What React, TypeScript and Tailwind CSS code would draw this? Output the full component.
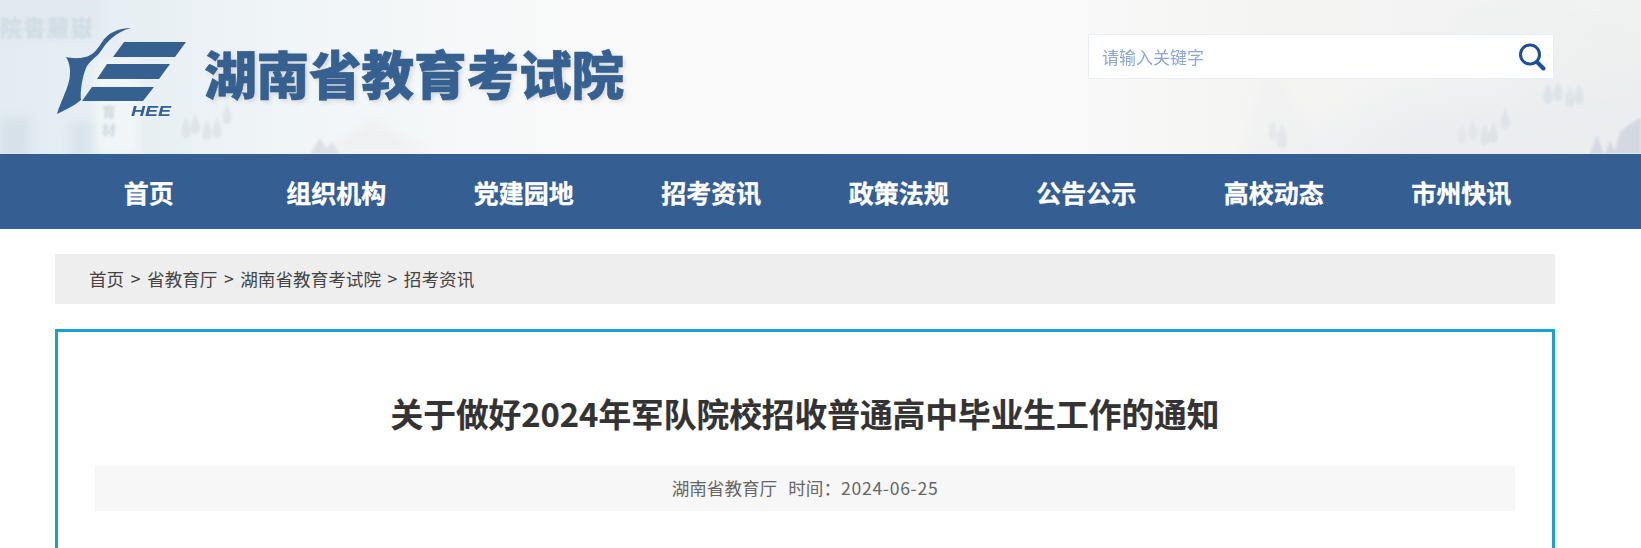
const NAV = ["首页", "组织机构", "党建园地", "招考资讯", "政策法规", "公告公示", "高校动态", "市州快讯"];

function Drop({ x, y, s = 1, o = 0.55 }: { x: number; y: number; s?: number; o?: number }) {
  return (
    <path
      d={`M${x} ${y - 11 * s}C${x + 2 * s} ${y - 5 * s} ${x + 4.5 * s} ${y - 1 * s} ${x + 4.5 * s} ${y + 4 * s}C${x + 4.5 * s} ${y + 8 * s} ${x + 2 * s} ${y + 10 * s} ${x} ${y + 10 * s}C${x - 2 * s} ${y + 10 * s} ${x - 4.5 * s} ${y + 8 * s} ${x - 4.5 * s} ${y + 4 * s}C${x - 4.5 * s} ${y - 1 * s} ${x - 2 * s} ${y - 5 * s} ${x} ${y - 11 * s}Z`}
      fill="#d5dae0"
      opacity={o}
    />
  );
}

function HeaderArt() {
  return (
    <svg className="absolute inset-0 h-full w-full" viewBox="0 0 1641 154" preserveAspectRatio="none" aria-hidden="true">
      <defs>
        <linearGradient id="base" x1="0" y1="0" x2="1" y2="0">
          <stop offset="0" stopColor="#e2ecf2" />
          <stop offset="0.1" stopColor="#e9f0f4" />
          <stop offset="0.2" stopColor="#f2f6f8" />
          <stop offset="0.36" stopColor="#f9f9f9" />
          <stop offset="0.62" stopColor="#fafafa" />
          <stop offset="0.78" stopColor="#f4f4f3" />
          <stop offset="1" stopColor="#f0f1f1" />
        </linearGradient>
        <filter id="soft" x="-10%" y="-10%" width="120%" height="120%">
          <feGaussianBlur stdDeviation="1" />
        </filter>
        <filter id="softer" x="-10%" y="-10%" width="120%" height="120%">
          <feGaussianBlur stdDeviation="5" />
        </filter>
        <filter id="wide" x="-30%" y="-60%" width="160%" height="220%">
          <feGaussianBlur stdDeviation="22" />
        </filter>
      </defs>
      <rect width="1641" height="154" fill="url(#base)" />
      <path d="M1240 175L1420 100L1700 75V175Z" fill="#e8ebef" opacity="0.7" filter="url(#wide)" />
      <g filter="url(#softer)">
        <rect x="-10" y="-10" width="110" height="50" fill="#dfe8ee" opacity="0.7" />
        <rect x="0" y="118" width="30" height="40" fill="#d2dde5" opacity="0.7" />
        <rect x="70" y="122" width="24" height="36" fill="#d6e0e7" opacity="0.7" />
        <rect x="95" y="60" width="44" height="94" fill="#f3f7f9" opacity="0.8" />
        <path d="M320 154L372 118L430 154Z" fill="#eff0f2" />
        <path d="M1240 154L1270 60L1320 154Z" fill="#ecedee" opacity="0.35" />
        <path d="M1450 20C1480 0 1560 0 1641 30V120L1520 90Z" fill="#ecedee" opacity="0.3" />
      </g>
      <g filter="url(#soft)" fontFamily="'Noto Sans CJK SC',serif" fontWeight="900">
        <text x="0" y="36" fontSize="22" letterSpacing="1.5" fill="#c8d6df" opacity="0.65">院書麓嶽</text>
        <text x="102" y="117" fontSize="14" fill="#b5c3cd" opacity="0.5">育</text>
        <text x="102" y="135" fontSize="14" fill="#b5c3cd" opacity="0.5">材</text>
      </g>
      <g filter="url(#soft)">
        <Drop x={186} y={128} />
        <Drop x={195} y={124} />
        <Drop x={207} y={130} />
        <Drop x={217} y={128} />
        <Drop x={227} y={114} />
        <Drop x={1273} y={130} o={0.35} />
        <Drop x={1282} y={136} s={1.2} o={0.4} />
        <Drop x={1462} y={134} o={0.3} />
        <Drop x={1473} y={130} o={0.35} />
        <Drop x={1485} y={135} />
        <Drop x={1493} y={133} />
        <Drop x={1505} y={119} />
        <Drop x={1548} y={94} />
        <Drop x={1558} y={91} />
        <Drop x={1570} y={97} />
        <Drop x={1579} y={94} />
        <path d="M1590 154L1597 136L1604 154ZM1605 154L1610 140L1616 154ZM1614 154L1620 132L1630 124L1641 118V154Z" fill="#d4d9e1" />
        <path d="M310 154L320 138L330 154ZM322 154L332 142L340 154Z" fill="#dde1e5" />
      </g>
    </svg>
  );
}

function Logo() {
  return (
    <svg className="mt-[26px] shrink-0" width="130" height="92" viewBox="56 26 130 92" aria-label="HEE">
      <path
        d="M131 28C118 28 108 33 102 42C97 50 92 56 85 57C78 59 71 58 66 57C70 63 71 72 69 81C66 93 60 103 57 114C65 110 74 106 81 100C80 92 82 78 86 68C89 61 96 58 101 51C106 43 115 32 131 28Z"
        fill="#36608f"
      />
      <path d="M124 42H186L175 57H113Z M107 64H170L159 79H97Z M92 87H154L143 101H82Z" fill="#36608f" />
      <text
        x="131"
        y="116"
        fontFamily="'Liberation Sans',sans-serif"
        fontSize="15"
        fontWeight="700"
        fontStyle="italic"
        fill="#36608f"
        textLength="40"
        lengthAdjust="spacingAndGlyphs"
      >
        HEE
      </text>
    </svg>
  );
}

export default function App() {
  return (
    <div className="h-[548px] overflow-hidden bg-white font-['Noto_Sans_CJK_SC',sans-serif]">
      <header className="relative h-[154px] overflow-hidden">
        <HeaderArt />
        <div className="relative flex items-start justify-between pl-[56px] pr-[87px]">
          <div className="flex items-start gap-[18px]">
            <Logo />
            <h1 className="mt-[38px] text-[52.7px] leading-[68px] font-black tracking-[-0.2px] whitespace-nowrap text-[#36608f] [-webkit-text-stroke:0.6px_#36608f] [text-shadow:2px_2px_5px_rgba(0,0,0,0.14)]">
              湖南省教育考试院
            </h1>
          </div>
          <div className="mt-[34px] flex h-[45px] w-[466px] items-center border border-[#e9eef4] bg-white pr-[7px] pl-[13px]">
            <input
              className="min-w-0 flex-1 bg-transparent text-[17px] leading-[24px] outline-none placeholder:text-[#8aa6d8]"
              placeholder="请输入关键字"
              readOnly
            />
            <svg width="28" height="28" viewBox="0 0 28 28" fill="none" stroke="#1c4f96" aria-hidden="true">
              <circle cx="12" cy="11.5" r="9.5" strokeWidth="3" />
              <path d="M19 19L25.5 25.5" strokeWidth="4" strokeLinecap="round" />
            </svg>
          </div>
        </div>
      </header>

      <nav className="h-[75px] bg-[#355e92]">
        <ul className="ml-[55px] grid h-full w-[1500px] grid-cols-8">
          {NAV.map((item) => (
            <li key={item} className="flex items-center justify-center text-[25px] leading-[32px] font-bold text-white [-webkit-text-stroke:0.3px_#ffffff]">
              {item}
            </li>
          ))}
        </ul>
      </nav>

      <main className="ml-[55px] w-[1500px] pt-[25px]">
        <div className="flex h-[50px] items-center bg-[#eeeeee] pl-[34px] text-[17.6px] leading-[26px] [word-spacing:2.6px] whitespace-pre text-[#444444]">
          首页 &gt; 省教育厅 &gt; 湖南省教育考试院 &gt; 招考资讯
        </div>
        <article className="mt-[25px] h-[300px] border-[3px] border-[#1ba0d5] px-[37px] pt-[59px]">
          <h2 className="text-center text-[32.7px] leading-[44px] font-bold text-[#333333] [-webkit-text-stroke:0.2px_#333333]">
            关于做好2024年军队院校招收普通高中毕业生工作的通知
          </h2>
          <div className="mt-[31px] flex h-[45px] items-center justify-center gap-[11px] bg-[#f7f7f7] pb-[2px] text-[17.6px] leading-[26px] text-[#666666]">
            <span>湖南省教育厅</span>
            <span>
              时间：<span className="tracking-[0.7px]">2024-06-25</span>
            </span>
          </div>
        </article>
      </main>
    </div>
  );
}
